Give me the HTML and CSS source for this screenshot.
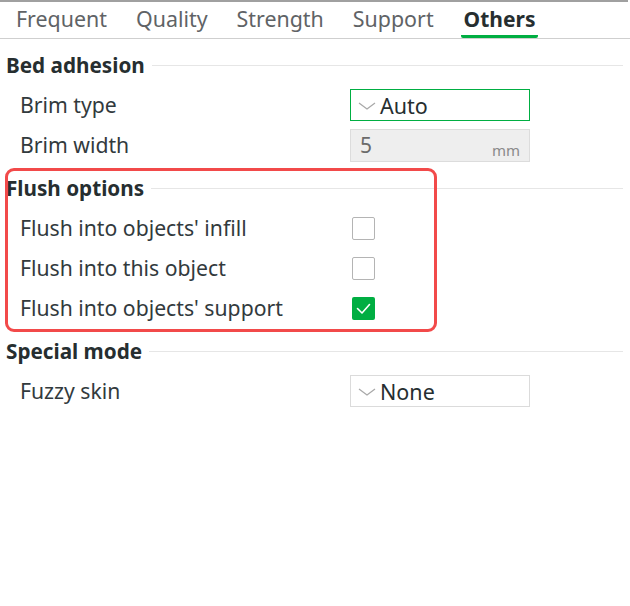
FILE: index.html
```html
<!DOCTYPE html>
<html>
<head>
<meta charset="utf-8">
<link rel="stylesheet" href="styles.css">
</head>
<body>
<div class="panel">
  <nav class="tabs">
    <span class="tab">Frequent</span>
    <span class="tab">Quality</span>
    <span class="tab">Strength</span>
    <span class="tab">Support</span>
    <span class="tab active">Others</span>
  </nav>

  <section class="section first">
    <div class="sec-head"><span class="sec-title">Bed adhesion</span><span class="sec-line"></span></div>
    <div class="row">
      <span class="label">Brim type</span>
      <div class="combo focused"><svg class="chev" viewBox="0 0 18 8" width="18" height="8"><path d="M1 1 L9 7 L17 1" fill="none" stroke="#a8a8a8" stroke-width="1.2"/></svg><span class="combo-text">Auto</span></div>
    </div>
    <div class="row">
      <span class="label">Brim width</span>
      <div class="field disabled"><span class="field-val">5</span><span class="unit">mm</span></div>
    </div>
  </section>

  <section class="section flush">
    <div class="highlight"></div>
    <div class="sec-head"><span class="sec-title">Flush options</span><span class="sec-line"></span></div>
    <div class="row">
      <span class="label">Flush into objects' infill</span>
      <span class="check"></span>
    </div>
    <div class="row">
      <span class="label">Flush into this object</span>
      <span class="check"></span>
    </div>
    <div class="row">
      <span class="label">Flush into objects' support</span>
      <span class="check on"><svg viewBox="0 0 23 23" width="23" height="23"><path d="M5.5 11.5 L10 16 L17.5 7.5" fill="none" stroke="#fff" stroke-width="1.6" stroke-linecap="round" stroke-linejoin="round"/></svg></span>
    </div>
  </section>

  <section class="section">
    <div class="sec-head"><span class="sec-title">Special mode</span><span class="sec-line"></span></div>
    <div class="row">
      <span class="label">Fuzzy skin</span>
      <div class="combo"><svg class="chev" viewBox="0 0 18 8" width="18" height="8"><path d="M1 1 L9 7 L17 1" fill="none" stroke="#a8a8a8" stroke-width="1.2"/></svg><span class="combo-text">None</span></div>
    </div>
  </section>
</div>
</body>
</html>
```

FILE: styles.css
```css
html, body {
  margin: 0;
  padding: 0;
  background: #ffffff;
}
body {
  font-family: "Noto Sans", "Open Sans", sans-serif;
  color: #262e30;
  width: 630px;
  height: 606px;
  overflow: hidden;
}
.panel {
  border-top: 2px solid #a0a0a0;
  width: 628px;
}
.tabs {
  display: flex;
  align-items: flex-end;
  gap: 29px;
  height: 36px;
  padding-left: 16px;
  border-bottom: 1px solid #cfcfcf;
  width: 614px;
  margin-right: -2px;
}
.tab {
  font-size: 21.4px;
  color: #5f6366;
  line-height: 30px;
  height: 34px;
  box-sizing: border-box;
  padding-bottom: 2px;
}
.tab.active {
  font-weight: 700;
  color: #262e30;
  border-bottom: 3px solid #00ae42;
  border-radius: 2px;
  padding: 0 3px 0;
  margin-left: -2px;
  font-size: 21px;
}
.section {
  position: relative;
  margin-top: 3px;
}
.section.first {
  margin-top: 6px;
}
.sec-head {
  display: flex;
  align-items: center;
  height: 40px;
  padding-left: 6px;
}
.sec-title {
  font-weight: 700;
  font-size: 20.7px;
  color: #262e30;
}
.sec-line {
  flex: 1;
  height: 1px;
  background: #e6e6e6;
  margin-left: 7px;
  margin-right: 5px;
}
.row {
  display: flex;
  align-items: center;
  height: 40px;
  padding-left: 20px;
}
.label {
  font-size: 21.2px;
  color: #323a3d;
  width: 330px;
  margin-top: -1px;
}
.combo {
  display: flex;
  align-items: center;
  box-sizing: border-box;
  width: 180px;
  height: 32px;
  border: 1px solid #dbdbdb;
  padding-left: 7px;
}
.combo.focused {
  border-color: #00ae42;
}
.chev {
  margin-right: 4px;
  margin-top: 2px;
}
.combo-text {
  font-size: 21.5px;
  color: #262e30;
}
.field {
  display: flex;
  align-items: center;
  box-sizing: border-box;
  width: 180px;
  height: 33px;
  border: 1px solid #dcdcdc;
  background: #eeeeee;
  padding: 0 9px 0 9px;
}
.field-val {
  flex: 1;
  font-size: 21px;
  color: #6b6b6b;
}
.unit {
  font-size: 15px;
  color: #8a8a8a;
  margin-top: 9px;
}
.check {
  box-sizing: border-box;
  width: 23px;
  height: 23px;
  margin-left: 2px;
  border: 1.5px solid #b4b4b4;
  border-radius: 2px;
  background: #fff;
}
.check.on {
  border: none;
  background: #00ae42;
}
.check.on svg {
  display: block;
}
.highlight {
  position: absolute;
  left: 5px;
  top: 0;
  width: 432px;
  height: 164px;
  box-sizing: border-box;
  border: 3.5px solid #f24a4a;
  border-radius: 9px;
  pointer-events: none;
}
```
